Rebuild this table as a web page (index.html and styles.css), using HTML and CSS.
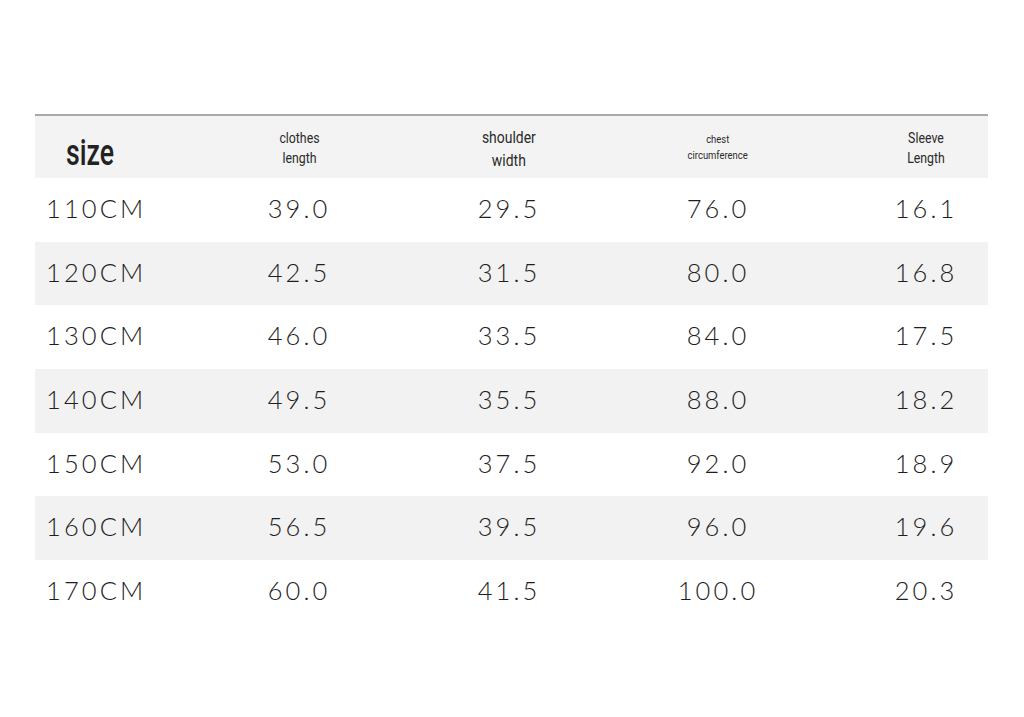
FILE: index.html
```html
<!DOCTYPE html>
<html>
<head>
<meta charset="utf-8">
<link rel="stylesheet" href="styles.css">
</head>
<body>
<div class="chart">
  <div class="row head">
    <div class="cell first"><span class="size">size</span></div>
    <div class="cell"><span class="lbl m">clothes<br>length</span></div>
    <div class="cell"><span class="lbl l">shoulder<br>width</span></div>
    <div class="cell"><span class="lbl s">chest<br>circumference</span></div>
    <div class="cell last"><span class="lbl m">Sleeve<br>Length</span></div>
  </div>
  <div class="row"><div class="cell first">110CM</div><div class="cell">39.0</div><div class="cell">29.5</div><div class="cell">76.0</div><div class="cell last">16.1</div></div>
  <div class="row alt"><div class="cell first">120CM</div><div class="cell">42.5</div><div class="cell">31.5</div><div class="cell">80.0</div><div class="cell last">16.8</div></div>
  <div class="row"><div class="cell first">130CM</div><div class="cell">46.0</div><div class="cell">33.5</div><div class="cell">84.0</div><div class="cell last">17.5</div></div>
  <div class="row alt"><div class="cell first">140CM</div><div class="cell">49.5</div><div class="cell">35.5</div><div class="cell">88.0</div><div class="cell last">18.2</div></div>
  <div class="row"><div class="cell first">150CM</div><div class="cell">53.0</div><div class="cell">37.5</div><div class="cell">92.0</div><div class="cell last">18.9</div></div>
  <div class="row alt"><div class="cell first">160CM</div><div class="cell">56.5</div><div class="cell">39.5</div><div class="cell">96.0</div><div class="cell last">19.6</div></div>
  <div class="row"><div class="cell first">170CM</div><div class="cell">60.0</div><div class="cell">41.5</div><div class="cell">100.0</div><div class="cell last">20.3</div></div>
</div>
</body>
</html>
```
FILE: styles.css
```css
html, body {
  margin: 0;
  padding: 0;
  background: #ffffff;
}
body {
  width: 1024px;
  height: 717px;
  overflow: hidden;
}
.chart {
  margin: 114px 0 0 35px;
  width: 953px;
  border-top: 2px solid #a9a9a9;
}
.row {
  display: grid;
  grid-template-columns: 159px 210px 210px 208px 166px;
  height: 63.7px;
  align-items: center;
  font-family: "Lato", "Open Sans", sans-serif;
  font-size: 25.5px;
  font-weight: 300;
  letter-spacing: 3.1px;
  color: #1e1e1e;
}
.row .cell {
  padding-bottom: 4px;
}
.row.head {
  height: 62px;
  background: #f3f3f3;
}
.row.head .cell {
  padding-bottom: 0;
}
.row.alt {
  background: #f2f2f2;
}
.cell {
  text-align: center;
}
.cell.first {
  text-align: left;
  padding-left: 11px;
}
.cell.last {
  padding-left: 42px;
}
.size {
  display: inline-block;
  margin-left: 20px;
  padding-top: 10px;
  font-family: "Roboto", sans-serif;
  font-weight: 500;
  font-size: 37px;
  letter-spacing: 0;
  color: #222;
  transform: scaleX(0.72);
  transform-origin: left center;
}
.lbl {
  display: inline-block;
  font-family: "Roboto", sans-serif;
  letter-spacing: 0;
  color: #2a2a2a;
  font-weight: 400;
  transform: scaleX(0.82);
  transform-origin: center center;
}
.lbl.m {
  font-size: 15px;
  line-height: 20px;
  padding-top: 2px;
}
.lbl.l {
  font-size: 17px;
  line-height: 23px;
  padding-top: 4px;
}
.lbl.s {
  font-size: 11.5px;
  line-height: 16px;
}
```
